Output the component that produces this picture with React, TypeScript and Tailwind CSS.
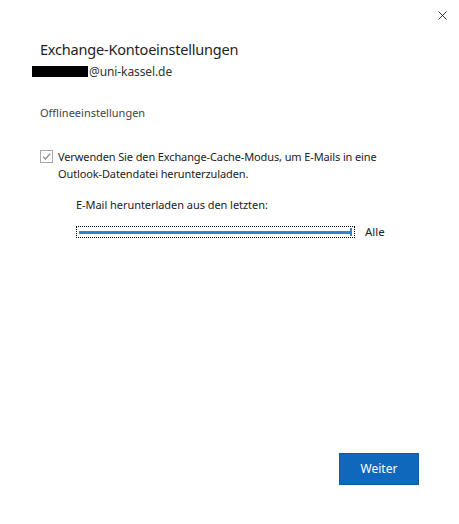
import { X } from 'lucide-react';

const fontClass = "font-['Segoe_UI','Noto_Sans','Liberation_Sans',sans-serif]";

export default function App() {
    return (
        <div className={`relative h-[524px] w-[459px] overflow-hidden bg-white ${fontClass}`}>
            <button className="absolute right-[9px] top-[7px] flex h-[16px] w-[16px] items-center justify-center text-[#111]">
                <X size={15} strokeWidth={1.3} />
            </button>

            <div className="flex h-full flex-col pl-[40px] pr-[40px] pt-[39px]">
                <h1 className="text-[14.5px] leading-[20px] tracking-[-0.2px] text-[#1e1e1e]">Exchange-Kontoeinstellungen</h1>
                <div className="-ml-[8px] mt-[5px] flex items-center text-[12px] leading-[15px] text-[#333]">
                    <span className="h-[11px] w-[56px] bg-black" />
                    <span className="ml-px tracking-[-0.1px]">@uni-kassel.de</span>
                </div>

                <p className="mt-[27px] text-[11px] leading-[14px] text-[#444]">Offlineeinstellungen</p>

                <label className="mt-[28px] flex items-start gap-[5px] text-[11px] leading-[17px] tracking-[-0.12px] text-[#222]">
                    <span className="mt-[2px] flex h-[13px] w-[13px] shrink-0 items-center justify-center border border-[#a8a8a8] bg-white">
                        <svg width="11" height="11" viewBox="0 0 11 11" fill="none">
                            <path d="M2 5.6 L4.4 8 L9 2.8" stroke="#8c8c8c" strokeWidth="1.3" />
                        </svg>
                    </span>
                    <span>
                        Verwenden Sie den Exchange-Cache-Modus, um E-Mails in eine<br />
                        Outlook-Datendatei herunterzuladen.
                    </span>
                </label>

                <div className="ml-[36px] mt-[14px]">
                    <p className="text-[11px] leading-[17px] tracking-[-0.05px] text-[#222]">E-Mail herunterladen aus den letzten:</p>
                    <div className="mt-[12px] flex items-center">
                        <div className="flex h-[12px] w-[279px] items-center border border-dotted border-black px-[2px]">
                            <div className="h-[3px] flex-1 bg-[#2c87d2]" />
                            <div className="h-[8px] w-[2px] bg-[#2c87d2]" />
                        </div>
                        <span className="ml-[10px] text-[11.5px] leading-[14px] text-[#222]">Alle</span>
                    </div>
                </div>

                <div className="mt-auto mb-[39px] flex justify-end">
                    <button className="h-[32px] w-[80px] border border-[#0b5aa2] bg-[#1068bd] text-[12px] text-white">
                        Weiter
                    </button>
                </div>
            </div>
        </div>
    );
}
